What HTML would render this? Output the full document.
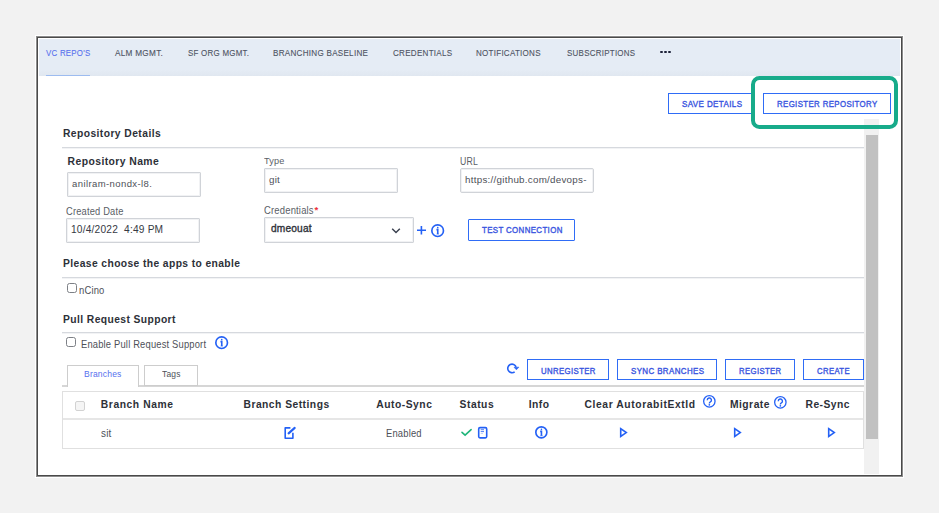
<!DOCTYPE html>
<html><head><meta charset="utf-8"><style>
html,body{margin:0;padding:0;}
body{width:939px;height:513px;background:#f2f2f2;position:relative;overflow:hidden;font-family:"Liberation Sans",sans-serif;}
.t{position:absolute;white-space:pre;line-height:1.2;}
</style></head><body>
<div style="position:absolute;left:35px;top:35px;width:869px;height:443px;box-sizing:border-box;background:#fff;"></div>
<div style="position:absolute;left:36px;top:36px;width:867px;height:441px;box-sizing:border-box;border:1px solid #8c8c8c;"></div>
<div style="position:absolute;left:37px;top:37px;width:865px;height:439px;box-sizing:border-box;border:1px solid #4a4a4a;background:#fff;"></div>
<div style="position:absolute;left:39px;top:39px;width:861px;height:37px;box-sizing:border-box;background:linear-gradient(#e5ecf5 0,#e5ecf5 82%,#e0e7f0 100%);"></div>
<div style="position:absolute;left:46px;top:75px;width:44px;height:1px;box-sizing:border-box;background:#9dbcf0;"></div>
<div style="position:absolute;left:660.3px;top:50.8px;width:2.6px;height:2.6px;box-sizing:border-box;background:#1c2238;border-radius:50%;"></div>
<div style="position:absolute;left:664.3px;top:50.8px;width:2.6px;height:2.6px;box-sizing:border-box;background:#1c2238;border-radius:50%;"></div>
<div style="position:absolute;left:668.3px;top:50.8px;width:2.6px;height:2.6px;box-sizing:border-box;background:#1c2238;border-radius:50%;"></div>
<div style="position:absolute;left:668px;top:93px;width:85px;height:21px;box-sizing:border-box;border:1px solid #2f6cf6;"></div>
<div style="position:absolute;left:763px;top:93px;width:128px;height:21px;box-sizing:border-box;border:1px solid #2f6cf6;"></div>
<div style="position:absolute;left:864px;top:119px;width:15px;height:355px;box-sizing:border-box;background:#f1f1f1;"></div>
<div style="position:absolute;left:866px;top:135px;width:12px;height:304px;box-sizing:border-box;background:#c1c1c1;"></div>
<div style="position:absolute;left:751px;top:76px;width:147px;height:53px;box-sizing:border-box;border:4px solid #17ab8a;border-radius:8.5px;"></div>
<div style="position:absolute;left:62px;top:147px;width:802px;height:1px;box-sizing:border-box;background:#d6d9de;box-shadow:0 1px 0 #f2f3f5;"></div>
<div style="position:absolute;left:67px;top:172px;width:134px;height:25px;box-sizing:border-box;border:1px solid #d0d3d8;box-shadow:inset 0 0 0 1px #f1f2f4;border-radius:1px;"></div>
<div style="position:absolute;left:66px;top:218px;width:134px;height:25px;box-sizing:border-box;border:1px solid #d0d3d8;box-shadow:inset 0 0 0 1px #f1f2f4;border-radius:1px;"></div>
<div style="position:absolute;left:264px;top:168px;width:134px;height:25px;box-sizing:border-box;border:1px solid #d0d3d8;box-shadow:inset 0 0 0 1px #f1f2f4;border-radius:1px;"></div>
<div style="position:absolute;left:460px;top:168px;width:134px;height:25px;box-sizing:border-box;border:1px solid #d0d3d8;box-shadow:inset 0 0 0 1px #f1f2f4;border-radius:2px;"></div>
<div style="position:absolute;left:264px;top:217px;width:150px;height:26px;box-sizing:border-box;border:1px solid #d0d3d8;box-shadow:inset 0 0 0 1px #f1f2f4;border-radius:1px;"></div>
<svg style="position:absolute;left:390px;top:226px" width="12" height="10" viewBox="0 0 12 10"><path d="M2.2 2.8 L6 6.5 L9.8 2.8" fill="none" stroke="#3b4150" stroke-width="1.5"/></svg>
<svg style="position:absolute;left:416px;top:225px" width="11" height="11" viewBox="0 0 11 11"><path d="M5.4 1 V9.5 M1 5.2 H10" fill="none" stroke="#2461f5" stroke-width="1.6"/></svg>
<svg style="position:absolute;left:430.05px;top:222.65px" width="15.3" height="15.3" viewBox="0 0 15.3 15.3"><circle cx="7.65" cy="7.65" r="5.825" fill="none" stroke="#2461f5" stroke-width="1.65"/><circle cx="7.75" cy="4.65" r="0.8" fill="#2461f5"/><path d="M6.45 6.65 H7.75 V10.95" fill="none" stroke="#2461f5" stroke-width="1.6"/><path d="M6.65 11.05 H8.85" fill="none" stroke="#2461f5" stroke-width="1.0" opacity="0.7"/></svg>
<div style="position:absolute;left:468px;top:219px;width:107px;height:21.5px;box-sizing:border-box;border:1.4px solid #2f6cf6;border-radius:1px;"></div>
<div style="position:absolute;left:62px;top:277px;width:802px;height:1px;box-sizing:border-box;background:#d6d9de;box-shadow:0 1px 0 #f2f3f5;"></div>
<div style="position:absolute;left:67px;top:283px;width:10px;height:10px;box-sizing:border-box;border:1.2px solid #7d8086;border-radius:2.5px;"></div>
<div style="position:absolute;left:62px;top:332px;width:802px;height:1px;box-sizing:border-box;background:#d6d9de;box-shadow:0 1px 0 #f2f3f5;"></div>
<div style="position:absolute;left:66px;top:337px;width:10px;height:10px;box-sizing:border-box;border:1.2px solid #7d8086;border-radius:2.5px;"></div>
<svg style="position:absolute;left:214.25px;top:335.25px" width="15.3" height="15.3" viewBox="0 0 15.3 15.3"><circle cx="7.65" cy="7.65" r="5.825" fill="none" stroke="#2461f5" stroke-width="1.65"/><circle cx="7.75" cy="4.65" r="0.8" fill="#2461f5"/><path d="M6.45 6.65 H7.75 V10.95" fill="none" stroke="#2461f5" stroke-width="1.6"/><path d="M6.65 11.05 H8.85" fill="none" stroke="#2461f5" stroke-width="1.0" opacity="0.7"/></svg>
<div style="position:absolute;left:62px;top:385px;width:802px;height:1.5px;box-sizing:border-box;background:#d6d6d6;"></div>
<div style="position:absolute;left:67px;top:365px;width:72px;height:22px;box-sizing:border-box;border:1px solid #cdcdcd;border-bottom:none;background:#fff;"></div>
<div style="position:absolute;left:144px;top:365px;width:54px;height:21px;box-sizing:border-box;border:1px solid #cdcdcd;background:#fff;"></div>
<svg style="position:absolute;left:502px;top:360px" width="22" height="18" viewBox="0 0 22 18"><path d="M12.67 11.82 A4.3 4.3 0 1 1 14.1 6.9" fill="none" stroke="#2461f5" stroke-width="1.6"/><path d="M12.0 7.2 L16.9 7.2 L14.4 9.8 Z" fill="#2461f5" stroke="#2461f5" stroke-width="0.6" stroke-linejoin="round"/></svg>
<div style="position:absolute;left:527px;top:359px;width:82px;height:21px;box-sizing:border-box;border:1px solid #2f6cf6;"></div>
<div style="position:absolute;left:617px;top:359px;width:100px;height:21px;box-sizing:border-box;border:1px solid #2f6cf6;"></div>
<div style="position:absolute;left:725px;top:359px;width:70px;height:21px;box-sizing:border-box;border:1px solid #2f6cf6;"></div>
<div style="position:absolute;left:803px;top:359px;width:61px;height:21px;box-sizing:border-box;border:1px solid #2f6cf6;"></div>
<div style="position:absolute;left:62px;top:391px;width:802px;height:58px;box-sizing:border-box;border:1px solid #e0e0e0;"></div>
<div style="position:absolute;left:63px;top:418px;width:800px;height:1.5px;box-sizing:border-box;background:#e6e6e6;"></div>
<div style="position:absolute;left:75px;top:401px;width:10px;height:10px;box-sizing:border-box;border:1px solid #d2d2d2;background:#f5f5f5;border-radius:2px;"></div>
<svg style="position:absolute;left:701.65px;top:394.15px" width="14.7" height="14.7" viewBox="0 0 14.7 14.7"><circle cx="7.35" cy="7.35" r="5.699999999999999" fill="none" stroke="#2461f5" stroke-width="1.3"/><path d="M5.25 6.1499999999999995 A2.1 2.1 0 1 1 8.35 7.949999999999999 Q7.35 8.45 7.35 9.55" fill="none" stroke="#2461f5" stroke-width="1.4"/><circle cx="7.35" cy="10.85" r="0.85" fill="#2461f5"/></svg>
<svg style="position:absolute;left:773.25px;top:395.15px" width="14.7" height="14.7" viewBox="0 0 14.7 14.7"><circle cx="7.35" cy="7.35" r="5.699999999999999" fill="none" stroke="#2461f5" stroke-width="1.3"/><path d="M5.25 6.1499999999999995 A2.1 2.1 0 1 1 8.35 7.949999999999999 Q7.35 8.45 7.35 9.55" fill="none" stroke="#2461f5" stroke-width="1.4"/><circle cx="7.35" cy="10.85" r="0.85" fill="#2461f5"/></svg>
<svg style="position:absolute;left:283px;top:426px" width="14" height="14" viewBox="0 0 14 14"><path d="M7.4 1.9 H2.2 V12.2 H9.9 V6.8" fill="none" stroke="#2461f5" stroke-width="1.6" stroke-linejoin="round"/><path d="M5.6 7.4 L11.7 1.9" fill="none" stroke="#2461f5" stroke-width="2.1" stroke-linecap="round"/></svg>
<svg style="position:absolute;left:459px;top:426px" width="14" height="12" viewBox="0 0 14 12"><path d="M3 6.4 L6.1 9.2 L12.1 3.6" fill="none" stroke="#1fb57a" stroke-width="1.6" stroke-linecap="round"/></svg>
<svg style="position:absolute;left:477px;top:426px" width="11" height="14" viewBox="0 0 11 14"><rect x="1.7" y="1.6" width="8" height="10.3" rx="1.3" fill="none" stroke="#2461f5" stroke-width="1.6"/><path d="M3.7 3.7 H7 M3.7 5.6 H7" stroke="#2461f5" stroke-width="1" opacity="0.8"/><path d="M3.7 7.5 H6" stroke="#2461f5" stroke-width="0.8" opacity="0.35"/></svg>
<svg style="position:absolute;left:533.95px;top:425.15px" width="14.7" height="14.7" viewBox="0 0 14.7 14.7"><circle cx="7.35" cy="7.35" r="5.5249999999999995" fill="none" stroke="#2461f5" stroke-width="1.65"/><circle cx="7.449999999999999" cy="4.35" r="0.8" fill="#2461f5"/><path d="M6.1499999999999995 6.35 H7.449999999999999 V10.649999999999999" fill="none" stroke="#2461f5" stroke-width="1.6"/><path d="M6.35 10.75 H8.549999999999999" fill="none" stroke="#2461f5" stroke-width="1.0" opacity="0.7"/></svg>
<svg style="position:absolute;left:619.2px;top:427px" width="10" height="12" viewBox="0 0 10 12"><path d="M1.7 1.7 L7.3 5.6 L1.7 9.5 Z" fill="none" stroke="#2461f5" stroke-width="1.6" stroke-linejoin="miter"/></svg>
<svg style="position:absolute;left:733.2px;top:427px" width="10" height="12" viewBox="0 0 10 12"><path d="M1.7 1.7 L7.3 5.6 L1.7 9.5 Z" fill="none" stroke="#2461f5" stroke-width="1.6" stroke-linejoin="miter"/></svg>
<svg style="position:absolute;left:826.6px;top:427px" width="10" height="12" viewBox="0 0 10 12"><path d="M1.7 1.7 L7.3 5.6 L1.7 9.5 Z" fill="none" stroke="#2461f5" stroke-width="1.6" stroke-linejoin="miter"/></svg>
<div class="t" style="left:45.90px;top:48.00px;font-size:9.2px;font-weight:400;color:#5670ee;letter-spacing:0.300px;transform:scaleX(0.8562);transform-origin:0 0;-webkit-text-stroke:0.1px #5670ee;">VC REPO&#x27;S</div>
<div class="t" style="left:115.10px;top:48.30px;font-size:9.2px;font-weight:400;color:#4d5362;letter-spacing:0.300px;transform:scaleX(0.8943);transform-origin:0 0;-webkit-text-stroke:0.1px #4d5362;">ALM MGMT.</div>
<div class="t" style="left:187.50px;top:48.30px;font-size:9.2px;font-weight:400;color:#4d5362;letter-spacing:0.300px;transform:scaleX(0.8628);transform-origin:0 0;-webkit-text-stroke:0.1px #4d5362;">SF ORG MGMT.</div>
<div class="t" style="left:272.80px;top:48.30px;font-size:9.2px;font-weight:400;color:#4d5362;letter-spacing:0.300px;transform:scaleX(0.8811);transform-origin:0 0;-webkit-text-stroke:0.1px #4d5362;">BRANCHING BASELINE</div>
<div class="t" style="left:392.70px;top:48.30px;font-size:9.2px;font-weight:400;color:#4d5362;letter-spacing:0.300px;transform:scaleX(0.8780);transform-origin:0 0;-webkit-text-stroke:0.1px #4d5362;">CREDENTIALS</div>
<div class="t" style="left:476.40px;top:48.30px;font-size:9.2px;font-weight:400;color:#4d5362;letter-spacing:0.300px;transform:scaleX(0.8734);transform-origin:0 0;-webkit-text-stroke:0.1px #4d5362;">NOTIFICATIONS</div>
<div class="t" style="left:566.60px;top:48.30px;font-size:9.2px;font-weight:400;color:#4d5362;letter-spacing:0.300px;transform:scaleX(0.8661);transform-origin:0 0;-webkit-text-stroke:0.1px #4d5362;">SUBSCRIPTIONS</div>
<div class="t" style="left:681.50px;top:99.40px;font-size:9.3px;font-weight:400;color:#3a55e0;letter-spacing:0.450px;transform:scaleX(0.8604);transform-origin:0 0;-webkit-text-stroke:0.4px #3a55e0;">SAVE DETAILS</div>
<div class="t" style="left:776.50px;top:99.40px;font-size:9.3px;font-weight:400;color:#3a55e0;letter-spacing:0.450px;transform:scaleX(0.8430);transform-origin:0 0;-webkit-text-stroke:0.4px #3a55e0;">REGISTER REPOSITORY</div>
<div class="t" style="left:62.90px;top:127.80px;font-size:10.3px;font-weight:700;color:#2d3038;letter-spacing:0.436px;">Repository Details</div>
<div class="t" style="left:67.60px;top:155.50px;font-size:10.4px;font-weight:700;color:#2d3038;letter-spacing:0.409px;">Repository Name</div>
<div class="t" style="left:72.00px;top:178.00px;font-size:9.5px;font-weight:400;color:#4d5058;letter-spacing:0.409px;">anilram-nondx-l8.</div>
<div class="t" style="left:66.00px;top:205.90px;font-size:10.3px;font-weight:400;color:#5a5e66;letter-spacing:0.200px;transform:scaleX(0.9040);transform-origin:0 0;">Created Date</div>
<div class="t" style="left:71.00px;top:223.10px;font-size:10.6px;font-weight:400;color:#363a44;letter-spacing:0.200px;transform:scaleX(0.9606);transform-origin:0 0;">10/4/2022  4:49 PM</div>
<div class="t" style="left:264.30px;top:155.40px;font-size:9.8px;font-weight:400;color:#5a5e66;letter-spacing:0.200px;transform:scaleX(0.9334);transform-origin:0 0;">Type</div>
<div class="t" style="left:268.90px;top:173.60px;font-size:9.8px;font-weight:400;color:#4d5058;letter-spacing:0.287px;">git</div>
<div class="t" style="left:460.20px;top:155.50px;font-size:10.2px;font-weight:400;color:#5a5e66;letter-spacing:0.200px;transform:scaleX(0.8572);transform-origin:0 0;">URL</div>
<div class="t" style="left:465.10px;top:173.60px;font-size:9.8px;font-weight:400;color:#4d5058;letter-spacing:0.258px;width:123.40px;overflow:hidden;">https://github.com/devops-</div>
<div class="t" style="left:264.00px;top:205.00px;font-size:10.2px;font-weight:400;color:#5a5e66;letter-spacing:0.200px;transform:scaleX(0.9263);transform-origin:0 0;">Credentials</div>
<div class="t" style="left:314.50px;top:203.50px;font-size:9.6px;font-weight:700;color:#ee2f3a;letter-spacing:0.000px;">*</div>
<div class="t" style="left:271.40px;top:223.40px;font-size:10.4px;font-weight:400;color:#2d3038;letter-spacing:0.200px;transform:scaleX(0.9749);transform-origin:0 0;-webkit-text-stroke:0.35px #2d3038;">dmeouat</div>
<div class="t" style="left:482.10px;top:225.30px;font-size:9.3px;font-weight:400;color:#3a55e0;letter-spacing:0.450px;transform:scaleX(0.8462);transform-origin:0 0;-webkit-text-stroke:0.4px #3a55e0;">TEST CONNECTION</div>
<div class="t" style="left:63.10px;top:258.00px;font-size:10.3px;font-weight:700;color:#2d3038;letter-spacing:0.391px;">Please choose the apps to enable</div>
<div class="t" style="left:78.90px;top:284.70px;font-size:10.4px;font-weight:400;color:#4d5058;letter-spacing:0.200px;transform:scaleX(0.9052);transform-origin:0 0;">nCino</div>
<div class="t" style="left:63.10px;top:313.50px;font-size:10.3px;font-weight:700;color:#2d3038;letter-spacing:0.402px;">Pull Request Support</div>
<div class="t" style="left:81.00px;top:338.90px;font-size:10.1px;font-weight:400;color:#4d5058;letter-spacing:0.200px;transform:scaleX(0.9273);transform-origin:0 0;">Enable Pull Request Support</div>
<div class="t" style="left:84.40px;top:369.00px;font-size:9.3px;font-weight:400;color:#5670ee;letter-spacing:0.200px;transform:scaleX(0.9189);transform-origin:0 0;">Branches</div>
<div class="t" style="left:161.50px;top:369.00px;font-size:9.3px;font-weight:400;color:#4d5058;letter-spacing:0.200px;transform:scaleX(0.9082);transform-origin:0 0;">Tags</div>
<div class="t" style="left:540.50px;top:365.80px;font-size:9.3px;font-weight:400;color:#3a55e0;letter-spacing:0.450px;transform:scaleX(0.8378);transform-origin:0 0;-webkit-text-stroke:0.4px #3a55e0;">UNREGISTER</div>
<div class="t" style="left:630.80px;top:365.80px;font-size:9.3px;font-weight:400;color:#3a55e0;letter-spacing:0.450px;transform:scaleX(0.8537);transform-origin:0 0;-webkit-text-stroke:0.4px #3a55e0;">SYNC BRANCHES</div>
<div class="t" style="left:739.30px;top:365.80px;font-size:9.3px;font-weight:400;color:#3a55e0;letter-spacing:0.450px;transform:scaleX(0.8320);transform-origin:0 0;-webkit-text-stroke:0.4px #3a55e0;">REGISTER</div>
<div class="t" style="left:817.10px;top:365.80px;font-size:9.3px;font-weight:400;color:#3a55e0;letter-spacing:0.450px;transform:scaleX(0.8293);transform-origin:0 0;-webkit-text-stroke:0.4px #3a55e0;">CREATE</div>
<div class="t" style="left:100.80px;top:399.20px;font-size:10.3px;font-weight:700;color:#2d3038;letter-spacing:0.574px;">Branch Name</div>
<div class="t" style="left:243.50px;top:399.30px;font-size:10.3px;font-weight:700;color:#2d3038;letter-spacing:0.476px;">Branch Settings</div>
<div class="t" style="left:376.20px;top:399.30px;font-size:10.3px;font-weight:700;color:#2d3038;letter-spacing:0.530px;">Auto-Sync</div>
<div class="t" style="left:459.60px;top:399.30px;font-size:10.3px;font-weight:700;color:#2d3038;letter-spacing:0.512px;">Status</div>
<div class="t" style="left:528.70px;top:399.30px;font-size:10.3px;font-weight:700;color:#2d3038;letter-spacing:0.474px;">Info</div>
<div class="t" style="left:584.50px;top:399.30px;font-size:10.3px;font-weight:700;color:#2d3038;letter-spacing:0.597px;">Clear AutorabitExtId</div>
<div class="t" style="left:729.90px;top:399.30px;font-size:10.3px;font-weight:700;color:#2d3038;letter-spacing:0.502px;">Migrate</div>
<div class="t" style="left:805.50px;top:399.30px;font-size:10.3px;font-weight:700;color:#2d3038;letter-spacing:0.471px;">Re-Sync</div>
<div class="t" style="left:100.60px;top:428.00px;font-size:10.2px;font-weight:400;color:#4d5058;letter-spacing:0.200px;transform:scaleX(0.9761);transform-origin:0 0;">sit</div>
<div class="t" style="left:386.00px;top:427.90px;font-size:10.3px;font-weight:400;color:#4d5058;letter-spacing:0.200px;transform:scaleX(0.9118);transform-origin:0 0;">Enabled</div>
</body></html>
